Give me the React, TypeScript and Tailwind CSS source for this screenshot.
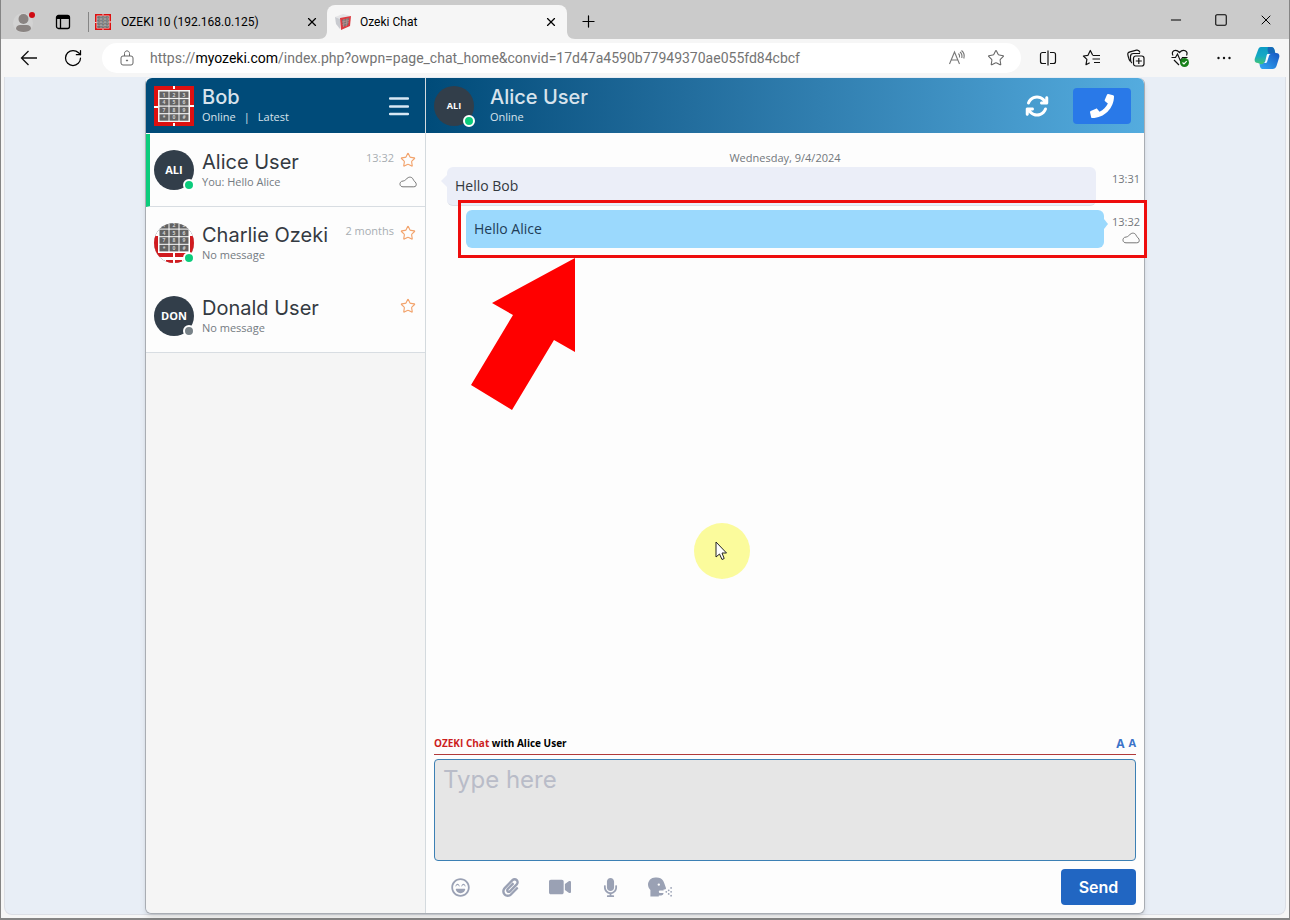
import { Minus, Plus, RotateCw, Square, Star, X } from 'lucide-react'
import {
  FaHeadSideCough,
  FaMicrophone,
  FaPaperclip,
  FaPhone,
  FaRegLaughBeam,
  FaVideo,
} from 'react-icons/fa'
import { FaArrowsRotate } from 'react-icons/fa6'

const contacts = [
  {
    name: 'Alice User',
    initials: 'ALI',
    preview: 'You: Hello Alice',
    time: '13:32',
    online: true,
    active: true,
    cloud: true,
  },
  {
    name: 'Charlie Ozeki',
    initials: '',
    preview: 'No message',
    time: '2 months',
    online: true,
    active: false,
    cloud: false,
  },
  {
    name: 'Donald User',
    initials: 'DON',
    preview: 'No message',
    time: '',
    online: false,
    active: false,
    cloud: false,
  },
]

const tools = [
  { label: 'Emoji', icon: FaRegLaughBeam, size: 'size-[19px]' },
  { label: 'Attach file', icon: FaPaperclip, size: 'size-[19px]' },
  { label: 'Video', icon: FaVideo, size: 'size-[22px]' },
  { label: 'Voice message', icon: FaMicrophone, size: 'size-[19px]' },
  { label: 'Speech', icon: FaHeadSideCough, size: 'size-6' },
]

const keys = ['1', '2', '3', '4', '5', '6', '7', '8', '9', '*', '0', '#']

function KeypadLogo({ className }: { className: string }) {
  return (
    <svg className={className} viewBox="0 0 40 40" aria-hidden="true">
      <rect width="40" height="40" fill="#dc1010" />
      <path d="M19 0h2v3h-2zM19 37h2v3h-2zM0 20h4v2H0zM36 19h4v2h-4z" fill="#fff" />
      <rect x="4" y="4" width="32" height="32" fill="#f2f2f2" />
      {keys.map((key, i) => {
        const x = 5.5 + (i % 3) * 10
        const y = 5.5 + Math.floor(i / 3) * 7.6
        return (
          <g key={key}>
            <rect x={x} y={y} width="9" height="6.4" fill="#646464" />
            <text x={x + 4.5} y={y + 5} fontSize="5" fontWeight="700" textAnchor="middle" fill="#d0d0d0">
              {key}
            </text>
          </g>
        )
      })}
    </svg>
  )
}

function RoundKeypad() {
  return (
    <svg className="size-10 rounded-full" viewBox="0 0 40 40" aria-hidden="true">
      <rect width="40" height="40" fill="#fff" />
      <path d="M0 13h4v19H0zM36 13h4v19h-4zM4 30h15v4H4zM21 30h15v4H21z" fill="#d01c20" />
      <path d="M12 37h7v3h-7zM21 37h7v3h-7z" fill="#d01c20" />
      {keys.map((key, i) => {
        const x = 5.5 + (i % 3) * 10
        const y = -1 + Math.floor(i / 3) * 7.6
        return (
          <g key={key}>
            <rect x={x} y={y} width="9" height="6.6" fill="#626262" />
            <text x={x + 4.5} y={y + 5} fontSize="5" fontWeight="700" textAnchor="middle" fill="#d0d0d0">
              {key}
            </text>
          </g>
        )
      })}
    </svg>
  )
}

function CloudIcon() {
  return (
    <svg className="h-3 w-[18px]" viewBox="0 0 18 12" fill="none" stroke="#777" aria-hidden="true">
      <path d="M4 10.8C-.2 10.8 0 5 4.2 5 6 5 7.300 2.600 9.200 1.600c1.800-1 4.600-.4 5.300 2.700 3.600 2.500 3.700 6.500.3 6.500z" />
    </svg>
  )
}

function StatusDot({ online }: { online: boolean }) {
  return (
    <span
      className={`absolute -right-px -bottom-px size-3 rounded-full border-2 border-white ${
        online ? 'bg-[#0ccc7c]' : 'bg-[#788288]'
      }`}
    />
  )
}

function TitleBar() {
  return (
    <div className="flex h-[39px] shrink-0 bg-[#cbcbcb] font-['Roboto'] text-xs text-black">
      <div className="flex w-[87px] shrink-0 items-center gap-6 pt-1 pl-3">
        <button aria-label="Profile">
          <svg className="size-[22px]" viewBox="0 0 22 22">
            <circle cx="10" cy="12" r="10" fill="#d3d3d3" />
            <circle cx="10.500" cy="8" r="5" fill="#8a8482" />
            <path d="M3 18c0-3 2-4 4-4h7c2 0 4 1 4 4-2 4-13 4-15 0z" fill="#8a8482" />
            <circle cx="19" cy="4" r="3" fill="#cf0a12" />
          </svg>
        </button>
        <button aria-label="Tab actions" className="-ml-1">
          <svg className="size-4" viewBox="0 0 16 16" fill="none" stroke="#000" strokeWidth="1.300">
            <rect x="1.500" y="1.500" width="13" height="13" rx="2" />
            <path d="M2 3.500h12" strokeWidth="3" />
            <path d="M5.500 4v10" />
          </svg>
        </button>
      </div>
      <div className="flex w-[239px] items-center pt-1 pr-2">
        <span className="h-5 w-px bg-[#858585]" />
        <KeypadLogo className="ml-[6px] size-4" />
        <span className="ml-[10px] flex-1">OZEKI 10 (192.168.0.125)</span>
        <button aria-label="Close tab">
          <X className="size-[14px]" strokeWidth={2} />
        </button>
      </div>
      <div className="relative mt-[5px] flex w-60 items-center rounded-t-lg bg-[#f6f6f6] pr-[9px] pb-px pl-2">
        <svg className="absolute bottom-0 -left-2 size-2" viewBox="0 0 8 8" fill="#f6f6f6">
          <path d="M8 0v8H0c5 0 8-3 8-8z" />
        </svg>
        <svg className="absolute -right-2 bottom-0 size-2" viewBox="0 0 8 8" fill="#f6f6f6">
          <path d="M0 0v8h8C3 8 0 5 0 0z" />
        </svg>
        <svg className="h-4 w-[17px]" viewBox="0 0 17 16">
          <path d="M0 3 8 0l8 2-11 3z" fill="#e4e4e6" />
          <path d="M0 3l5 2v10L1 10z" fill="#c9cbd0" />
          <path d="m5 4 11-2-1 10-9 4z" fill="#dc3a40" />
          <path d="m7 6 7-2-1 7-5 2z" fill="#777" />
          <path d="m9 5-.5 8M12 4.500l-.8 8M7 8l7-1.500M7.500 10.500l6-2" stroke="#d99" strokeWidth=".5" />
        </svg>
        <span className="ml-2 flex-1">Ozeki Chat</span>
        <button aria-label="Close tab">
          <X className="size-[14px]" strokeWidth={2} />
        </button>
      </div>
      <button aria-label="New tab" className="ml-3 pt-1">
        <Plus className="size-[19px]" strokeWidth={1.500} />
      </button>
      <div className="ml-auto flex items-center gap-[30px] pr-[15px]">
        <button aria-label="Minimize">
          <Minus className="size-4" strokeWidth={1.500} />
        </button>
        <button aria-label="Maximize">
          <Square className="size-[14px]" strokeWidth={1.800} />
        </button>
        <button aria-label="Close">
          <X className="size-4" strokeWidth={1.500} />
        </button>
      </div>
    </div>
  )
}

function BrowserActions() {
  return (
    <div className="flex shrink-0 items-center gap-6 pr-[9px] pl-[17px]">
      <button aria-label="Split screen">
        <svg className="size-5" viewBox="0 0 20 20" fill="none" stroke="#111" strokeWidth="1.200">
          <path d="M8 4.500H4.500c-1 0-2 1-2 2v7c0 1 1 2 2 2H8M12 4.500h3.500c1 0 2 1 2 2v7c0 1-1 2-2 2H12M10 2.500v15" />
        </svg>
      </button>
      <button aria-label="Favorites">
        <svg className="size-5" viewBox="0 0 20 20" fill="none" stroke="#111" strokeWidth="1.200" strokeLinejoin="round">
          <path d="M11 7h-.4L8.300 2.500 6 7.300l-4.600.7 3.500 3.400-.9 5.300 3.700-2M11 7.500h7M10.500 11h7.500M12 14.500h6" />
        </svg>
      </button>
      <button aria-label="Collections">
        <svg className="size-5" viewBox="0 0 20 20" fill="none" stroke="#111" strokeWidth="1.200">
          <path d="M4.500 13.500C2.500 11.500 2.500 9.500 2 7.500c-.6-2 0-3.200 2-3.700l6.500-1.600c2-.4 2.800.3 3.500 2.300" />
          <path d="M6 15c-1.700-.8-1.500-3-1.500-6.500 0-2 1-3 3-3H14" />
          <rect x="7.500" y="8" width="10.500" height="10" rx="2.200" fill="#f6f6f6" />
          <path d="M12.800 10v6M9.800 13h6" />
        </svg>
      </button>
      <button aria-label="Browser essentials">
        <svg className="size-5" viewBox="0 0 20 20" fill="none" stroke="#111" strokeWidth="1.200">
          <path d="M1.500 9.500h4l2-3.500 3 7 2-3.500h5M3 7.500C.5 3.500 5.500 0 9.500 4.500 13.500 0 18.500 3.500 16.500 7.500M4 12l5 5" />
          <circle cx="14.500" cy="14.500" r="4.500" fill="#17801a" stroke="none" />
          <path d="m12.500 14.500 1.500 1.500 2.700-2.800" stroke="#fff" />
        </svg>
      </button>
      <button aria-label="Settings and more">
        <svg className="size-5" viewBox="0 0 20 20" fill="#111">
          <circle cx="4.500" cy="10" r="1.200" />
          <circle cx="10" cy="10" r="1.200" />
          <circle cx="15.500" cy="10" r="1.200" />
        </svg>
      </button>
      <button aria-label="Copilot" className="-ml-1">
        <svg className="size-[26px]" viewBox="0 0 26 26">
          <defs>
            <linearGradient id="copilotLeft" x1="0" y1="0" x2="0" y2="1">
              <stop offset="0" stopColor="#0c9bc4" />
              <stop offset=".5" stopColor="#14a9c4" />
              <stop offset="1" stopColor="#48c96c" />
            </linearGradient>
            <linearGradient id="copilotRight" x1="1" y1="0" x2="0" y2="1">
              <stop offset="0" stopColor="#1657c2" />
              <stop offset="1" stopColor="#32a8f4" />
            </linearGradient>
          </defs>
          <path d="M7 2h10c2 0 3 1 3.500 3l1 4h-5c-2 0-3 1-3.500 3l-1.500 5c-.6 2-1.500 3-3.500 3L4 18c-3 0-4-2-3-5l3-8c.6-2 1.500-3 3-3z" fill="url(#copilotLeft)" />
          <path d="M14 2h3c2 0 3 1 3.500 3l1 4h-5c-2.500 0-3.500-3-2.500-7z" fill="#1769b8" />
          <path d="M19.500 8H22c3 0 4 2 3 5l-2.500 8c-.7 2-2 3-4 3H9c-2 0-3-1-3.500-5 3 .5 4.500-.5 5-2l2.500-6c.5-2 1.500-3 4-3z" fill="url(#copilotRight)" />
          <path d="M13.500 9h3.300c-1 0-1.600 1-2 2.500l-1.600 5c-.4 1-1 1.500-2 1.500H9.500c1 0 1.500-1 1.800-2l1.200-5c.2-1 .5-2 1-2z" fill="#f2faff" />
        </svg>
      </button>
    </div>
  )
}

function AddressBar() {
  return (
    <div className="flex h-[38px] shrink-0 items-center bg-[#f6f6f6]">
      <button aria-label="Back" className="ml-[18px]">
        <svg className="size-5" viewBox="0 0 20 20" fill="none" stroke="#111" strokeWidth="1.300">
          <path d="M18 10H2.500M9.500 3l-7 7 7 7" />
        </svg>
      </button>
      <button aria-label="Refresh" className="ml-6">
        <RotateCw className="size-5" strokeWidth={1.500} />
      </button>
      <div className="ml-[19px] flex h-[30px] min-w-0 flex-1 items-center rounded-full bg-white pr-4 pl-[17px]">
        <svg className="size-4 shrink-0" viewBox="0 0 16 16" fill="none" stroke="#666">
          <rect x="2" y="6" width="12" height="9" rx="2" />
          <path d="M5.500 6V3.500C5.500 0 10.500 0 10.500 3.500V6" />
          <circle cx="8" cy="10.500" r=".6" fill="#444" />
        </svg>
        <div
          role="textbox"
          aria-label="Address"
          contentEditable
          suppressContentEditableWarning
          className="ml-[15px] flex-1 truncate font-['Roboto'] text-sm text-[#747474] outline-none"
        >
          https://<span className="text-black">myozeki.com</span>
          /index.php?owpn=page_chat_home&amp;convid=17d47a4590b77949370ae055fd84cbcf
        </div>
        <button aria-label="Read aloud">
          <svg className="size-[18px]" viewBox="0 0 18 18" fill="none" stroke="#777" strokeWidth="1.100">
            <path d="M1.500 15 6.500 3l5 12M3.200 11h6.600M10.500 4.500c1 1 1.300 2.300 1 4M12 3c1.800 1.500 2.300 3.500 1.800 6M13.500 1.500c2.700 2.300 3.200 5 2.300 8" />
          </svg>
        </button>
        <button aria-label="Add to favorites" className="ml-[21px]">
          <Star className="size-[18px] text-[#666]" strokeWidth={1.400} />
        </button>
      </div>
      <BrowserActions />
    </div>
  )
}

function Sidebar() {
  return (
    <aside className="flex w-[280px] shrink-0 flex-col rounded-bl-md border-r border-[#d4dade] bg-[#f5f5f5]">
      <header className="flex h-[55px] items-center rounded-tl-md bg-[#004b79] px-2 text-[#d8e3ec]">
        <KeypadLogo className="size-10" />
        <div className="ml-2 flex-1 pt-[2px]">
          <h1 className="font-['Inter'] text-xl leading-5 font-medium">Bob</h1>
          <p className="flex text-[11px] leading-5">
            Online <span className="mx-2">|</span> Latest
          </p>
        </div>
        <button aria-label="Menu" className="mr-2">
          <svg className="size-5" viewBox="0 0 20 20" stroke="#d8e8f4" strokeWidth="2.500" strokeLinecap="round">
            <path d="M1 2.500h18M1 10.500h18M1 18h18" />
          </svg>
        </button>
      </header>
      <ul className="border-t border-white bg-[#fdfdfd]">
        {contacts.map((contact) => (
          <li
            key={contact.name}
            className={`flex h-[73px] border-b pr-2 ${
              contact.active
                ? 'border-l-4 border-b-[#d8dde2] border-l-[#0ccc7c] pl-1'
                : 'border-b-transparent pl-2 last:border-b-[#d8dde2]'
            }`}
          >
            <a href="#" className="flex min-w-0 flex-1 items-center gap-2">
              <span className="relative flex size-10 shrink-0 items-center justify-center rounded-full bg-[#323e4a] text-[11px] font-bold text-white">
                {contact.initials || <RoundKeypad />}
                <StatusDot online={contact.online} />
              </span>
              <span className="min-w-0 pb-px">
                <span className="block truncate font-['Inter'] text-xl leading-6 text-[#343a42]">
                  {contact.name}
                </span>
                <span className="block text-[11px] leading-4 text-[#747b82]">
                  {contact.preview}
                </span>
              </span>
            </a>
            <div className="flex items-start pt-4">
              <span className="mr-[5px] text-[11px] leading-4 text-[#a8adb2]">{contact.time}</span>
              <div className="flex w-[18px] flex-col items-center gap-2 pt-[2px]">
                <button aria-label={`Favorite ${contact.name}`}>
                  <Star className="size-4 text-[#f2a36c]" strokeWidth={1.700} />
                </button>
                {contact.cloud && <CloudIcon />}
              </div>
            </div>
          </li>
        ))}
      </ul>
    </aside>
  )
}

function Messages() {
  return (
    <div className="flex-1 pt-[17px] text-[11px] text-[#72777c]">
      <p className="text-center leading-4">Wednesday, 9/4/2024</p>
      <div className="mt-px flex pr-1 pl-[21px]">
        <div className="relative flex-1 rounded-md border-b border-[#dde1e8] bg-[#ebeef8] px-2 py-2 text-sm leading-[22px] text-[#33383e]">
          <svg className="absolute top-2 -left-[6px] h-3 w-[6px]" viewBox="0 0 6 12" fill="#ebeef8">
            <path d="M6 0v12L0 6z" />
          </svg>
          Hello Bob
        </div>
        <time className="ml-4 pt-1 leading-4">13:31</time>
      </div>
      <div className="relative mt-1 flex pr-1 pl-10">
        <div className="relative flex-1 rounded-md bg-[#9bd9fd] px-2 py-2 text-sm leading-[22px] text-[#1f3d58]">
          <svg className="absolute top-2 -right-1 h-3 w-1" viewBox="0 0 4 12" fill="#9bd9fd">
            <path d="M0 1v10l4-5z" />
          </svg>
          Hello Alice
        </div>
        <div className="ml-2 flex flex-col items-end gap-[2px] pt-1">
          <time className="leading-4">13:32</time>
          <CloudIcon />
        </div>
        <div className="pointer-events-none absolute -top-[10px] -right-[3px] -bottom-[10px] left-8 border-3 border-[#ee0d0d]" />
        <svg
          className="pointer-events-none absolute top-12 left-[45px] h-[152px] w-[105px]"
          viewBox="0 0 105 152"
          fill="#f00"
        >
          <path d="M104 0v94l-21-12-42 70L0 127l42-70-21-12z" />
        </svg>
      </div>
    </div>
  )
}

function Composer() {
  return (
    <form className="px-2 pb-2" onSubmit={(e) => e.preventDefault()}>
      <div className="flex h-[18px] items-center border-b border-[#b23a3a] pb-1 text-[10px] font-bold text-black">
        <label htmlFor="message" className="flex-1">
          <span className="text-[#cc1f1f]">OZEKI Chat</span> with Alice User
        </label>
        <button type="button" aria-label="Larger text" className="text-xs text-[#3a72c8]">
          A
        </button>
        <button type="button" aria-label="Smaller text" className="ml-1 text-[11px] text-[#3a72c8]">
          A
        </button>
      </div>
      <textarea
        id="message"
        placeholder="Type here"
        className="mt-1 block h-[102px] w-full resize-none rounded border border-[#3c80b4] bg-[#e6e6e6] px-2 py-1 font-['Inter'] text-2xl leading-8 outline-none placeholder:text-[#b9bcc8]"
      />
      <div className="mt-2 flex h-9 items-center">
        <div className="flex gap-[10px] pl-[6px] text-[#9aa1b4]">
          {tools.map(({ label, icon: Icon, size }) => (
            <button
              key={label}
              type="button"
              aria-label={label}
              className="flex h-9 w-10 items-center justify-center"
            >
              <Icon className={size} />
            </button>
          ))}
        </div>
        <button className="ml-auto h-9 w-[75px] rounded bg-[#2166c2] pb-px font-['Inter'] text-base font-semibold text-white">
          Send
        </button>
      </div>
    </form>
  )
}

function Conversation() {
  return (
    <main className="relative flex min-w-0 flex-1 flex-col rounded-r-md bg-[#fdfdfd]">
      <header className="flex h-[55px] shrink-0 items-center rounded-tr-md bg-linear-to-r from-[#004b79] to-[#54acdf] pr-[13px] pl-2 text-[#d8e3ec]">
        <span className="relative flex size-10 items-center justify-center rounded-full bg-[#323e4a] text-[9px] font-bold text-white">
          ALI
          <StatusDot online />
        </span>
        <div className="ml-4 flex-1 pt-[2px]">
          <h2 className="font-['Inter'] text-xl leading-5 font-medium">Alice User</h2>
          <p className="text-[11px] leading-5">Online</p>
        </div>
        <button aria-label="Reload conversation" className="text-white">
          <FaArrowsRotate className="size-6" />
        </button>
        <button
          aria-label="Call"
          className="ml-6 flex h-9 w-[58px] items-center justify-center rounded bg-[#2979e8] text-white"
        >
          <FaPhone className="size-6" />
        </button>
      </header>
      <Messages />
      <Composer />
      <div className="pointer-events-none absolute top-[445px] left-[268px] size-14 rounded-full bg-[#fbfb9c]">
        <svg className="absolute top-[18px] left-[21px] h-5 w-3" viewBox="0 0 12 20" fill="#fff" stroke="#222">
          <path d="M1 1v15l3.500-3 2.500 5.500 2.200-1L7 12h4.500z" />
        </svg>
      </div>
    </main>
  )
}

export default function App() {
  return (
    <div className="flex h-screen min-h-[640px] flex-col border-x border-b-2 border-[#858585] bg-[#f6f6f6] font-['Open_Sans',sans-serif]">
      <TitleBar />
      <AddressBar />
      <div className="mx-[3px] mb-[3px] flex min-h-0 flex-1 justify-center rounded-b-lg border-x border-b border-[#dcdfe6] bg-[#e8eef6]">
        <div className="mt-px flex w-full max-w-[1000px] rounded-md border-x border-b border-[#a9adb3] shadow-md">
          <Sidebar />
          <Conversation />
        </div>
      </div>
    </div>
  )
}
